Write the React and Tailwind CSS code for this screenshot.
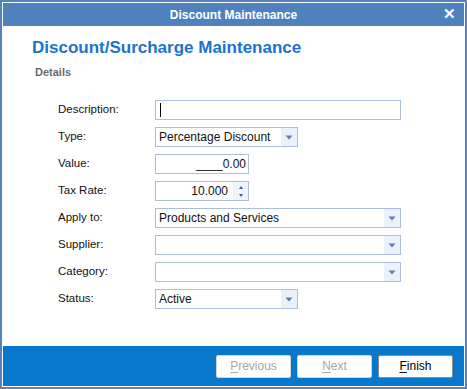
import { useState } from 'react';

function Arrow() {
  return (
    <svg width="8" height="5" viewBox="0 0 8 5" className="block">
      <path d="M0.5 0.5 H7.5 L4 4.5 Z" fill="#5b7db1" />
    </svg>
  );
}

function Dropdown({ value, width }) {
  return (
    <div className={`flex h-[20px] ${width} items-stretch border border-[#abbdd8] bg-white`}>
      <div className="flex flex-1 items-center pl-[3px] text-[12px] text-[#111]">{value}</div>
      <div className="flex w-[16px] items-center justify-center bg-[#ebf1fa]">
        <Arrow />
      </div>
    </div>
  );
}

function Row({ label, children }) {
  return (
    <div className="flex h-[20px] items-center">
      <div className="w-[97px] text-[11.5px] text-[#111]">{label}</div>
      {children}
    </div>
  );
}

function FooterButton({ first, rest, disabled }) {
  return (
    <button
      type="button"
      disabled={disabled}
      className={`h-[23px] w-[75px] rounded-[2px] border bg-white text-[12px] ${
        disabled ? 'border-[#d4d4d4] text-[#a6a6a6]' : 'border-[#8a8a8a] text-black'
      }`}
    >
      <span className="underline underline-offset-2">{first}</span>
      {rest}
    </button>
  );
}

export default function App() {
  const [description, setDescription] = useState('');

  return (
    <div className="h-[389px] w-[467px] bg-white font-['Liberation_Sans',Arial,sans-serif]">
      <div className="flex h-full flex-col border-2 border-[#5382bf] p-px">
        <div className="relative flex h-[23px] shrink-0 items-center justify-center bg-[#4f81bd]">
          <span className="text-[12px] font-bold text-white">Discount Maintenance</span>
          <span className="absolute right-[8px] top-[3px] text-[15px] font-bold leading-none text-white">✕</span>
        </div>

        <div className="flex-1">
          <h1 className="pl-[29px] pt-[12px] text-[17px] font-bold leading-[20px] text-[#1874cd]">
            Discount/Surcharge Maintenance
          </h1>
          <div className="pl-[32px] pt-[7px] text-[11px] font-bold leading-[14px] text-[#6a6a6a]">Details</div>

          <div className="flex flex-col gap-[7px] pl-[55px] pt-[21px]">
            <Row label="Description:">
              <div className="relative flex h-[20px] w-[246px] items-center border border-[#abbdd8] bg-white pl-[3px]">
                <input
                  value={description}
                  onChange={(e) => setDescription(e.target.value)}
                  className="h-full w-full text-[12px] outline-none"
                />
                <span className="absolute left-[4px] top-[2px] h-[14px] w-px bg-black" />
              </div>
            </Row>
            <Row label="Type:">
              <Dropdown value="Percentage Discount" width="w-[143px]" />
            </Row>
            <Row label="Value:">
              <div className="flex h-[20px] w-[94px] items-center justify-end border border-[#abbdd8] bg-white pr-[2px] text-[12px] text-[#111]">
                ____0.00
              </div>
            </Row>
            <Row label="Tax Rate:">
              <div className="flex h-[20px] w-[94px] items-stretch border border-[#abbdd8] bg-white">
                <div className="flex flex-1 items-center justify-end pr-[5px] text-[12px] text-[#111]">10.000</div>
                <div className="flex w-[15px] flex-col items-center justify-center gap-[5px] bg-[#f1f5fb]">
                  <svg width="4" height="3" viewBox="0 0 4 3" className="block">
                    <path d="M0 3 L2 0 L4 3 Z" fill="#3f5f8f" />
                  </svg>
                  <svg width="4" height="3" viewBox="0 0 4 3" className="block">
                    <path d="M0 0 L4 0 L2 3 Z" fill="#3f5f8f" />
                  </svg>
                </div>
              </div>
            </Row>
            <Row label="Apply to:">
              <Dropdown value="Products and Services" width="w-[246px]" />
            </Row>
            <Row label="Supplier:">
              <Dropdown value="" width="w-[246px]" />
            </Row>
            <Row label="Category:">
              <Dropdown value="" width="w-[246px]" />
            </Row>
            <Row label="Status:">
              <Dropdown value="Active" width="w-[143px]" />
            </Row>
          </div>
        </div>

        <div className="flex h-[40px] shrink-0 items-center justify-end gap-[6px] bg-[#0878cd] pr-[11px]">
          <FooterButton first="P" rest="revious" disabled />
          <FooterButton first="N" rest="ext" disabled />
          <FooterButton first="F" rest="inish" />
        </div>
      </div>
    </div>
  );
}
